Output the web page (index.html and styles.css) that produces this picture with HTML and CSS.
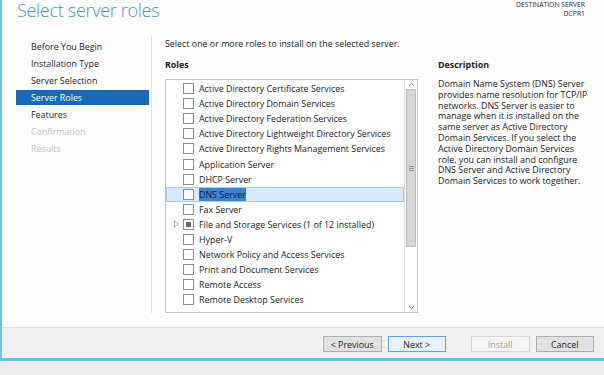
FILE: index.html
```html
<!DOCTYPE html>
<html>
<head>
<meta charset="utf-8">
<link rel="stylesheet" href="styles.css">
</head>
<body>
<div class="window">
  <header class="top">
    <h1 class="title">Select server roles</h1>
    <div class="dest">
      <div>DESTINATION SERVER</div>
      <div>DCPR1</div>
    </div>
  </header>
  <div class="main">
    <nav class="steps">
      <ul>
        <li>Before You Begin</li>
        <li>Installation Type</li>
        <li>Server Selection</li>
        <li class="active">Server Roles</li>
        <li>Features</li>
        <li class="disabled">Confirmation</li>
        <li class="disabled">Results</li>
      </ul>
    </nav>
    <section class="content">
      <p class="intro">Select one or more roles to install on the selected server.</p>
      <div class="cols">
        <div class="roles">
          <h2 class="heading">Roles</h2>
          <div class="listbox">
            <ul class="list">
              <li class="row"><span class="exp"></span><span class="cb"></span><span class="label">Active Directory Certificate Services</span></li>
              <li class="row"><span class="exp"></span><span class="cb"></span><span class="label">Active Directory Domain Services</span></li>
              <li class="row"><span class="exp"></span><span class="cb"></span><span class="label">Active Directory Federation Services</span></li>
              <li class="row"><span class="exp"></span><span class="cb"></span><span class="label">Active Directory Lightweight Directory Services</span></li>
              <li class="row"><span class="exp"></span><span class="cb"></span><span class="label">Active Directory Rights Management Services</span></li>
              <li class="row"><span class="exp"></span><span class="cb"></span><span class="label">Application Server</span></li>
              <li class="row"><span class="exp"></span><span class="cb"></span><span class="label">DHCP Server</span></li>
              <li class="row selected"><span class="exp"></span><span class="cb"></span><span class="label"><span class="sel-text">DNS Server</span></span></li>
              <li class="row"><span class="exp"></span><span class="cb"></span><span class="label">Fax Server</span></li>
              <li class="row"><span class="exp"><svg width="5" height="8" viewBox="0 0 5 8"><path d="M0.5 0.8 L4.3 4 L0.5 7.2 Z" fill="none" stroke="#a6a6a6" stroke-width="0.9"/></svg></span><span class="cb partial"></span><span class="label">File and Storage Services (1 of 12 installed)</span></li>
              <li class="row"><span class="exp"></span><span class="cb"></span><span class="label">Hyper-V</span></li>
              <li class="row"><span class="exp"></span><span class="cb"></span><span class="label">Network Policy and Access Services</span></li>
              <li class="row"><span class="exp"></span><span class="cb"></span><span class="label">Print and Document Services</span></li>
              <li class="row"><span class="exp"></span><span class="cb"></span><span class="label">Remote Access</span></li>
              <li class="row"><span class="exp"></span><span class="cb"></span><span class="label">Remote Desktop Services</span></li>
            </ul>
            <div class="scrollbar">
              <div class="arrow"><svg width="7" height="5" viewBox="0 0 7 5"><polyline points="1,4 3.5,1.3 6,4" fill="none" stroke="#8a8a8a" stroke-width="1"/></svg></div>
              <div class="track">
                <div class="thumb"><span class="grip"></span></div>
              </div>
              <div class="arrow"><svg width="7" height="5" viewBox="0 0 7 5"><polyline points="1,1 3.5,3.7 6,1" fill="none" stroke="#8a8a8a" stroke-width="1"/></svg></div>
            </div>
          </div>
        </div>
        <div class="desc">
          <h2 class="heading">Description</h2>
          <p class="desc-text">Domain Name System (DNS) Server<br>provides name resolution for TCP/IP<br>networks. DNS Server is easier to<br>manage when it is installed on the<br>same server as Active Directory<br>Domain Services. If you select the<br>Active Directory Domain Services<br>role, you can install and configure<br>DNS Server and Active Directory<br>Domain Services to work together.</p>
        </div>
      </div>
    </section>
  </div>
  <footer class="buttons">
    <button class="btn">&lt; Previous</button>
    <button class="btn primary">Next &gt;</button>
    <button class="btn disabled gap">Install</button>
    <button class="btn">Cancel</button>
  </footer>
</div>
</body>
</html>
```
FILE: styles.css
```css
* { box-sizing: border-box; }
html, body { margin: 0; padding: 0; }
body {
  background: #ececec;
  font-family: "Segoe UI", "Open Sans", sans-serif;
  font-size: 8.9px;
  color: #222222;
  width: 604px;
  height: 375px;
  overflow: hidden;
}
.window {
  height: 361px;
  background: #fdfdfd;
  border-left: 2px solid #6cc4ea;
  border-bottom: 3px solid #5fc0e8;
  display: flex;
  flex-direction: column;
}
.top {
  height: 36px;
  display: flex;
  justify-content: space-between;
  align-items: flex-start;
}
.title {
  margin: 0;
  padding: 2px 0 0 15px;
  font-size: 18px;
  line-height: 16px;
  font-weight: 300;
  color: #4a98b4;
  letter-spacing: -0.3px;
}
.dest {
  padding-right: 19px;
  text-align: right;
  font-size: 6.8px;
  line-height: 9px;
  color: #2a2a2a;
}
.main {
  flex: 1;
  display: flex;
  min-height: 0;
}
.steps {
  width: 150px;
  padding: 3px 2px 0 14px;
  border-right: 1px solid #e2e2e2;
  margin-bottom: 14px;
}
.steps ul { list-style: none; margin: 0; padding: 0; }
.steps li {
  height: 15px;
  line-height: 15px;
  margin-bottom: 2px;
  padding-left: 15px;
  color: #262626;
}
.steps li.active { background: #1868b6; color: #ffffff; }
.steps li.disabled { color: #c2c2c2; }
.content {
  flex: 1;
  padding: 2px 0 0 13px;
}
.intro { margin: 0; line-height: 11px; }
.cols { display: flex; margin-top: 10px; }
.heading {
  margin: 0 0 9px;
  font-size: 8.9px;
  line-height: 11px;
  font-weight: 700;
}
.roles { width: 253px; flex: none; }
.listbox {
  height: 234px;
  border: 1px solid #c6c6c6;
  background: #ffffff;
  display: flex;
}
.list {
  flex: 1;
  list-style: none;
  margin: 0;
  padding: 1px 0 0;
}
.row {
  height: 15.1px;
  display: flex;
  align-items: center;
  white-space: nowrap;
  border: 1px solid transparent;
}
.row.selected { background: #d9ebfb; border-color: #9ccbf1; }
.exp {
  width: 16px;
  display: flex;
  justify-content: center;
  padding-left: 2px;
}
.cb {
  width: 11px;
  height: 11px;
  border: 1px solid #8e8e8e;
  background: #ffffff;
  flex: none;
  display: flex;
  align-items: center;
  justify-content: center;
}
.cb.partial::after {
  content: "";
  width: 5px;
  height: 5px;
  background: #6a6a6a;
}
.label { margin-left: 5px; }
.sel-text { background: #3e82d4; color: #0c1d3c; }
.scrollbar {
  width: 13px;
  border-left: 1px solid #dedede;
  display: flex;
  flex-direction: column;
  padding: 0 1px;
}
.arrow {
  height: 9px;
  display: flex;
  align-items: center;
  justify-content: center;
}
.track { flex: 1; }
.thumb {
  height: 158px;
  background: #d6d6d6;
  border: 1px solid #bdbdbd;
  display: flex;
  align-items: center;
  justify-content: center;
}
.grip {
  width: 5px;
  height: 5px;
  border-top: 1px solid #8f8f8f;
  border-bottom: 1px solid #8f8f8f;
  background: linear-gradient(#8f8f8f, #8f8f8f) center / 100% 1px no-repeat;
}
.desc { margin-left: 20px; width: 166px; flex: none; }
.desc-text {
  margin: 0;
  line-height: 10.8px;
  white-space: nowrap;
}
.buttons {
  height: 31px;
  flex: none;
  background: #f0f0f0;
  border-top: 1px solid #e4e4e4;
  display: flex;
  justify-content: flex-end;
  align-items: flex-start;
  padding: 8px 10px 0 0;
}
.btn {
  width: 58.5px;
  height: 16px;
  margin: 0 0 0 6px;
  padding: 0;
  font-family: inherit;
  font-size: 8.9px;
  color: #1e1e1e;
  background: #e1e1e1;
  border: 1px solid #adadad;
}
.btn.primary { background: #e5f1fb; border-color: #5fa3e6; }
.btn.disabled { background: #f4f4f4; border-color: #d4d4d4; color: #a3a3a3; }
.btn.gap { margin-left: 25px; }
```
